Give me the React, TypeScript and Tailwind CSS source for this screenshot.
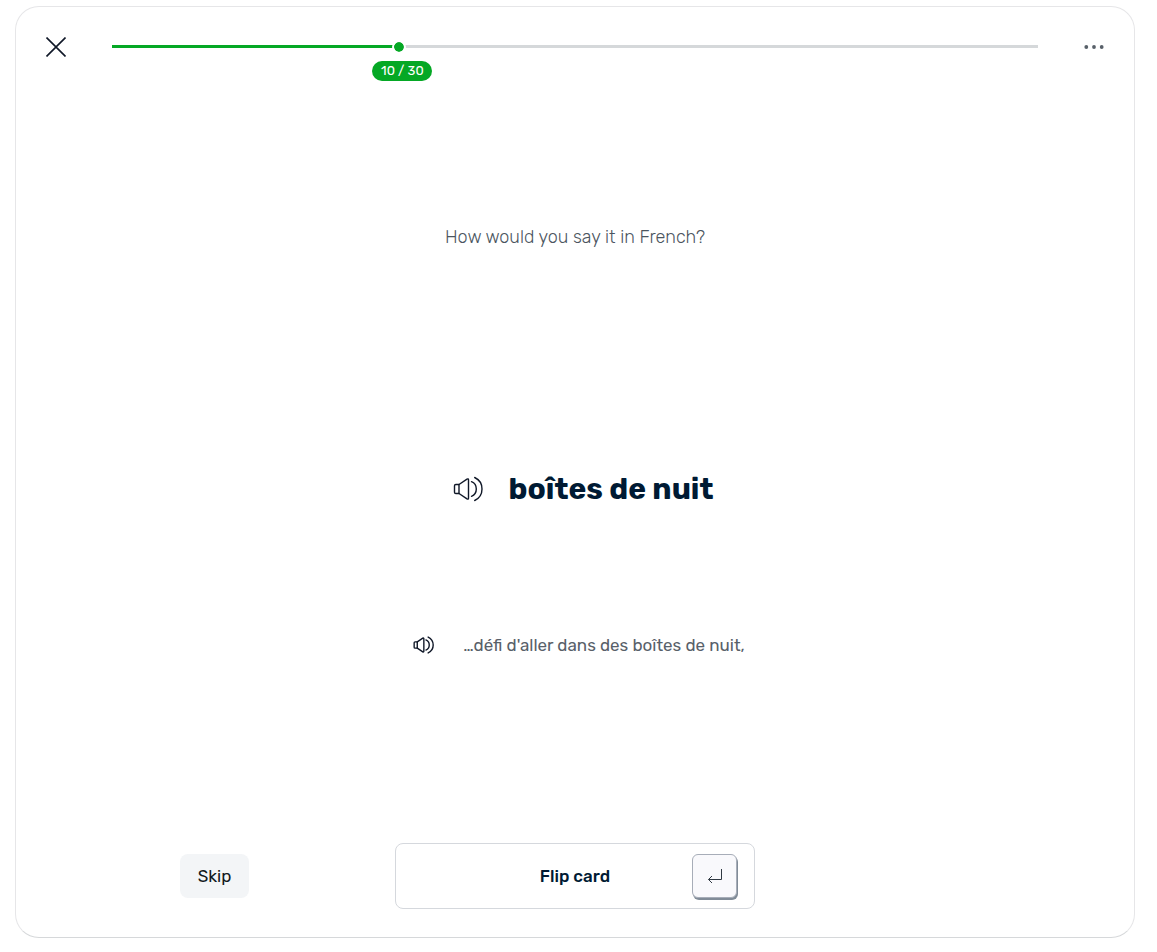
type Progress = {
  current: number
  total: number
}

const progress: Progress = { current: 10, total: 30 }

export default function App() {
  return (
    <main className="flex min-h-screen flex-col bg-white pt-1.5 pr-[22px] pb-3.5 pl-[15px] font-['Rubik','Roboto',sans-serif] text-[#001a33]">
      <section className="flex flex-1 flex-col rounded-3xl border border-[#e6e6e8] border-b-[#d6d8da]">
        <header className="flex h-20 items-center gap-9 px-5 pb-px">
          <button
            type="button"
            aria-label="Close"
            className="flex size-10 items-center justify-center text-[#101828]"
          >
            <CloseIcon />
          </button>
          <ProgressBar {...progress} />
          <button
            type="button"
            aria-label="More options"
            className="flex size-10 items-center justify-center text-[#586069]"
          >
            <DotsIcon />
          </button>
        </header>

        <div className="grid flex-1 grid-rows-[25fr_17fr_9fr_12fr] items-center justify-items-center">
          <p className="text-lg leading-6 font-light text-[#4b5560]">
            How would you say it in French?
          </p>

          <div className="flex items-center gap-2.5">
            <button
              type="button"
              aria-label="Play word"
              className="flex h-12 w-[62px] items-center justify-center text-[#101828]"
            >
              <SpeakerIcon className="h-[26px] w-[30px] stroke-[1.4]" />
            </button>
            <h1 className="text-3xl leading-10 font-bold">boîtes de nuit</h1>
          </div>

          <div className="flex items-center gap-[22px]">
            <button
              type="button"
              aria-label="Play sentence"
              className="flex size-9 items-center justify-center text-[#101828]"
            >
              <SpeakerIcon className="h-[18px] w-[21px] stroke-2" />
            </button>
            <p className="text-[17px] leading-6 text-[#586069]">
              …défi d'aller dans des boîtes de nuit,
            </p>
          </div>
        </div>

        <footer className="grid grid-cols-[1fr_360px_1fr] items-center px-[18px] pb-7">
          <button
            type="button"
            className="h-11 justify-self-center rounded-lg bg-[#f3f5f7] px-[18px] text-[17px] leading-6 text-[#101820]"
          >
            Skip
          </button>
          <button
            type="button"
            className="grid h-[66px] grid-cols-[1fr_auto_1fr] items-center rounded-lg border border-[#d5d8dd] bg-white px-[17px]"
          >
            <span className="col-start-2 text-[17px] leading-6 font-medium">Flip card</span>
            <kbd className="flex h-11 w-[45px] items-center justify-center justify-self-end rounded-md border border-[#a7adb8] bg-[#f9f9fc] text-[#303942] shadow-[1px_2px_0_#818c98]">
              <EnterIcon />
            </kbd>
          </button>
        </footer>
      </section>
    </main>
  )
}

function ProgressBar({ current, total }: Progress) {
  // the first card sits at 0%, the last one at 100%
  const percent = ((current - 1) / (total - 1)) * 100

  return (
    <div
      role="progressbar"
      aria-label="Cards"
      aria-valuemin={1}
      aria-valuemax={total}
      aria-valuenow={current}
      className="relative h-[3px] flex-1 bg-[#d5d8da]"
    >
      <div className="h-full bg-[#05a825]" style={{ width: `${percent}%` }} />
      <div
        className="absolute top-1/2 size-3.5 -translate-x-1/2 -translate-y-1/2 rounded-full border-2 border-white bg-[#05a825] bg-clip-padding"
        style={{ left: `${percent}%` }}
      />
      <div
        className="absolute top-4 -ml-[27px] w-[60px] rounded-full bg-[#05a825] text-center text-[13px] leading-5 text-white"
        style={{ left: `${percent}%` }}
      >
        {current} / {total}
      </div>
    </div>
  )
}

function CloseIcon() {
  return (
    <svg viewBox="0 0 20 20" className="size-5" fill="none" stroke="currentColor" strokeWidth="1.6">
      <path d="M.5.5l19 19M19.5.5l-19 19" />
    </svg>
  )
}

function DotsIcon() {
  return (
    <svg viewBox="0 0 20 4" className="h-1 w-5" fill="currentColor">
      <circle cx="2.3" cy="2" r="1.9" />
      <circle cx="10" cy="2" r="1.9" />
      <circle cx="17.7" cy="2" r="1.9" />
    </svg>
  )
}

function SpeakerIcon({ className }: { className: string }) {
  return (
    <svg
      viewBox="0 0 30 26"
      className={className}
      fill="none"
      stroke="currentColor"
      strokeLinecap="round"
      strokeLinejoin="round"
    >
      <path d="M6 8.5H2.8a1.3 1.3 0 0 0-1.3 1.3v6.4a1.3 1.3 0 0 0 1.3 1.3H6z" />
      <path d="M6 8.5l8-5.4c.8-.5 1.5-.2 1.5.7v18.4c0 .9-.7 1.2-1.5.7l-8-5.4" />
      <path d="M18.5 5.7c3 1.2 4.8 4 4.8 7.3s-1.8 6.1-4.8 7.3" />
      <path d="M21.7 1.5c4.6 2.2 7.3 6.5 7.3 11.5s-2.7 9.3-7.3 11.5" />
    </svg>
  )
}

function EnterIcon() {
  return (
    <svg viewBox="0 0 16 16" className="size-4" fill="none" stroke="currentColor">
      <path d="M14.5 1v10.5h-13M5 8l-3.5 3.5L5 15" />
    </svg>
  )
}
